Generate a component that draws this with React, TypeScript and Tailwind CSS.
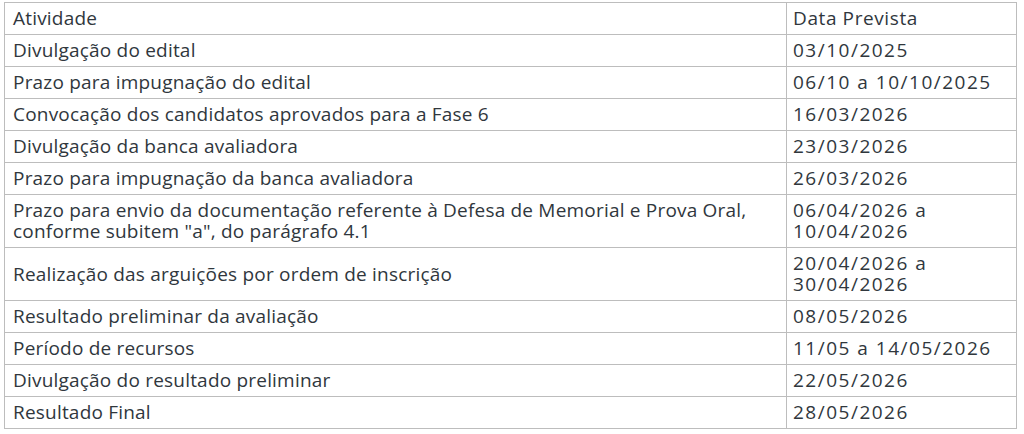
const rows: { atividade: React.ReactNode; data: React.ReactNode; tall?: boolean }[] = [
  { atividade: 'Divulgação do edital', data: '03/10/2025' },
  { atividade: 'Prazo para impugnação do edital', data: '06/10 a 10/10/2025' },
  { atividade: 'Convocação dos candidatos aprovados para a Fase 6', data: '16/03/2026' },
  { atividade: 'Divulgação da banca avaliadora', data: '23/03/2026' },
  { atividade: 'Prazo para impugnação da banca avaliadora', data: '26/03/2026' },
  {
    atividade: (
      <>
        Prazo para envio da documentação referente à Defesa de Memorial e Prova Oral,
        <br />
        conforme subitem "a", do parágrafo 4.1
      </>
    ),
    data: (
      <>
        06/04/2026 a<br />
        10/04/2026
      </>
    ),
    tall: true,
  },
  {
    atividade: 'Realização das arguições por ordem de inscrição',
    data: (
      <>
        20/04/2026 a<br />
        30/04/2026
      </>
    ),
    tall: true,
  },
  { atividade: 'Resultado preliminar da avaliação', data: '08/05/2026' },
  { atividade: 'Período de recursos', data: '11/05 a 14/05/2026' },
  { atividade: 'Divulgação do resultado preliminar', data: '22/05/2026' },
  { atividade: 'Resultado Final', data: '28/05/2026' },
];

export default function App() {
  return (
    <div className="min-h-screen bg-white pl-[4px] pt-[2px] font-['Open_Sans','Lato',sans-serif] text-[19px] leading-[21px] text-[#30373d]">
      <table className="w-[1013px] border-collapse">
        <thead>
          <tr className="h-[32px]">
            <th className="w-[782px] border border-[#bdbdbd] px-[8px] text-left font-normal align-middle tracking-[0.2px]">Atividade</th>
            <th className="border border-[#bdbdbd] px-[6px] text-left font-normal align-middle tracking-[0.6px]">Data Prevista</th>
          </tr>
        </thead>
        <tbody>
          {rows.map((r, i) => (
            <tr key={i} className={r.tall ? 'h-[53px]' : 'h-[32px]'}>
              <td className="border border-[#bdbdbd] px-[8px] align-middle tracking-[0.2px]">{r.atividade}</td>
              <td className="border border-[#bdbdbd] px-[6px] align-middle whitespace-nowrap tracking-[1.5px]">{r.data}</td>
            </tr>
          ))}
        </tbody>
      </table>
    </div>
  );
}
